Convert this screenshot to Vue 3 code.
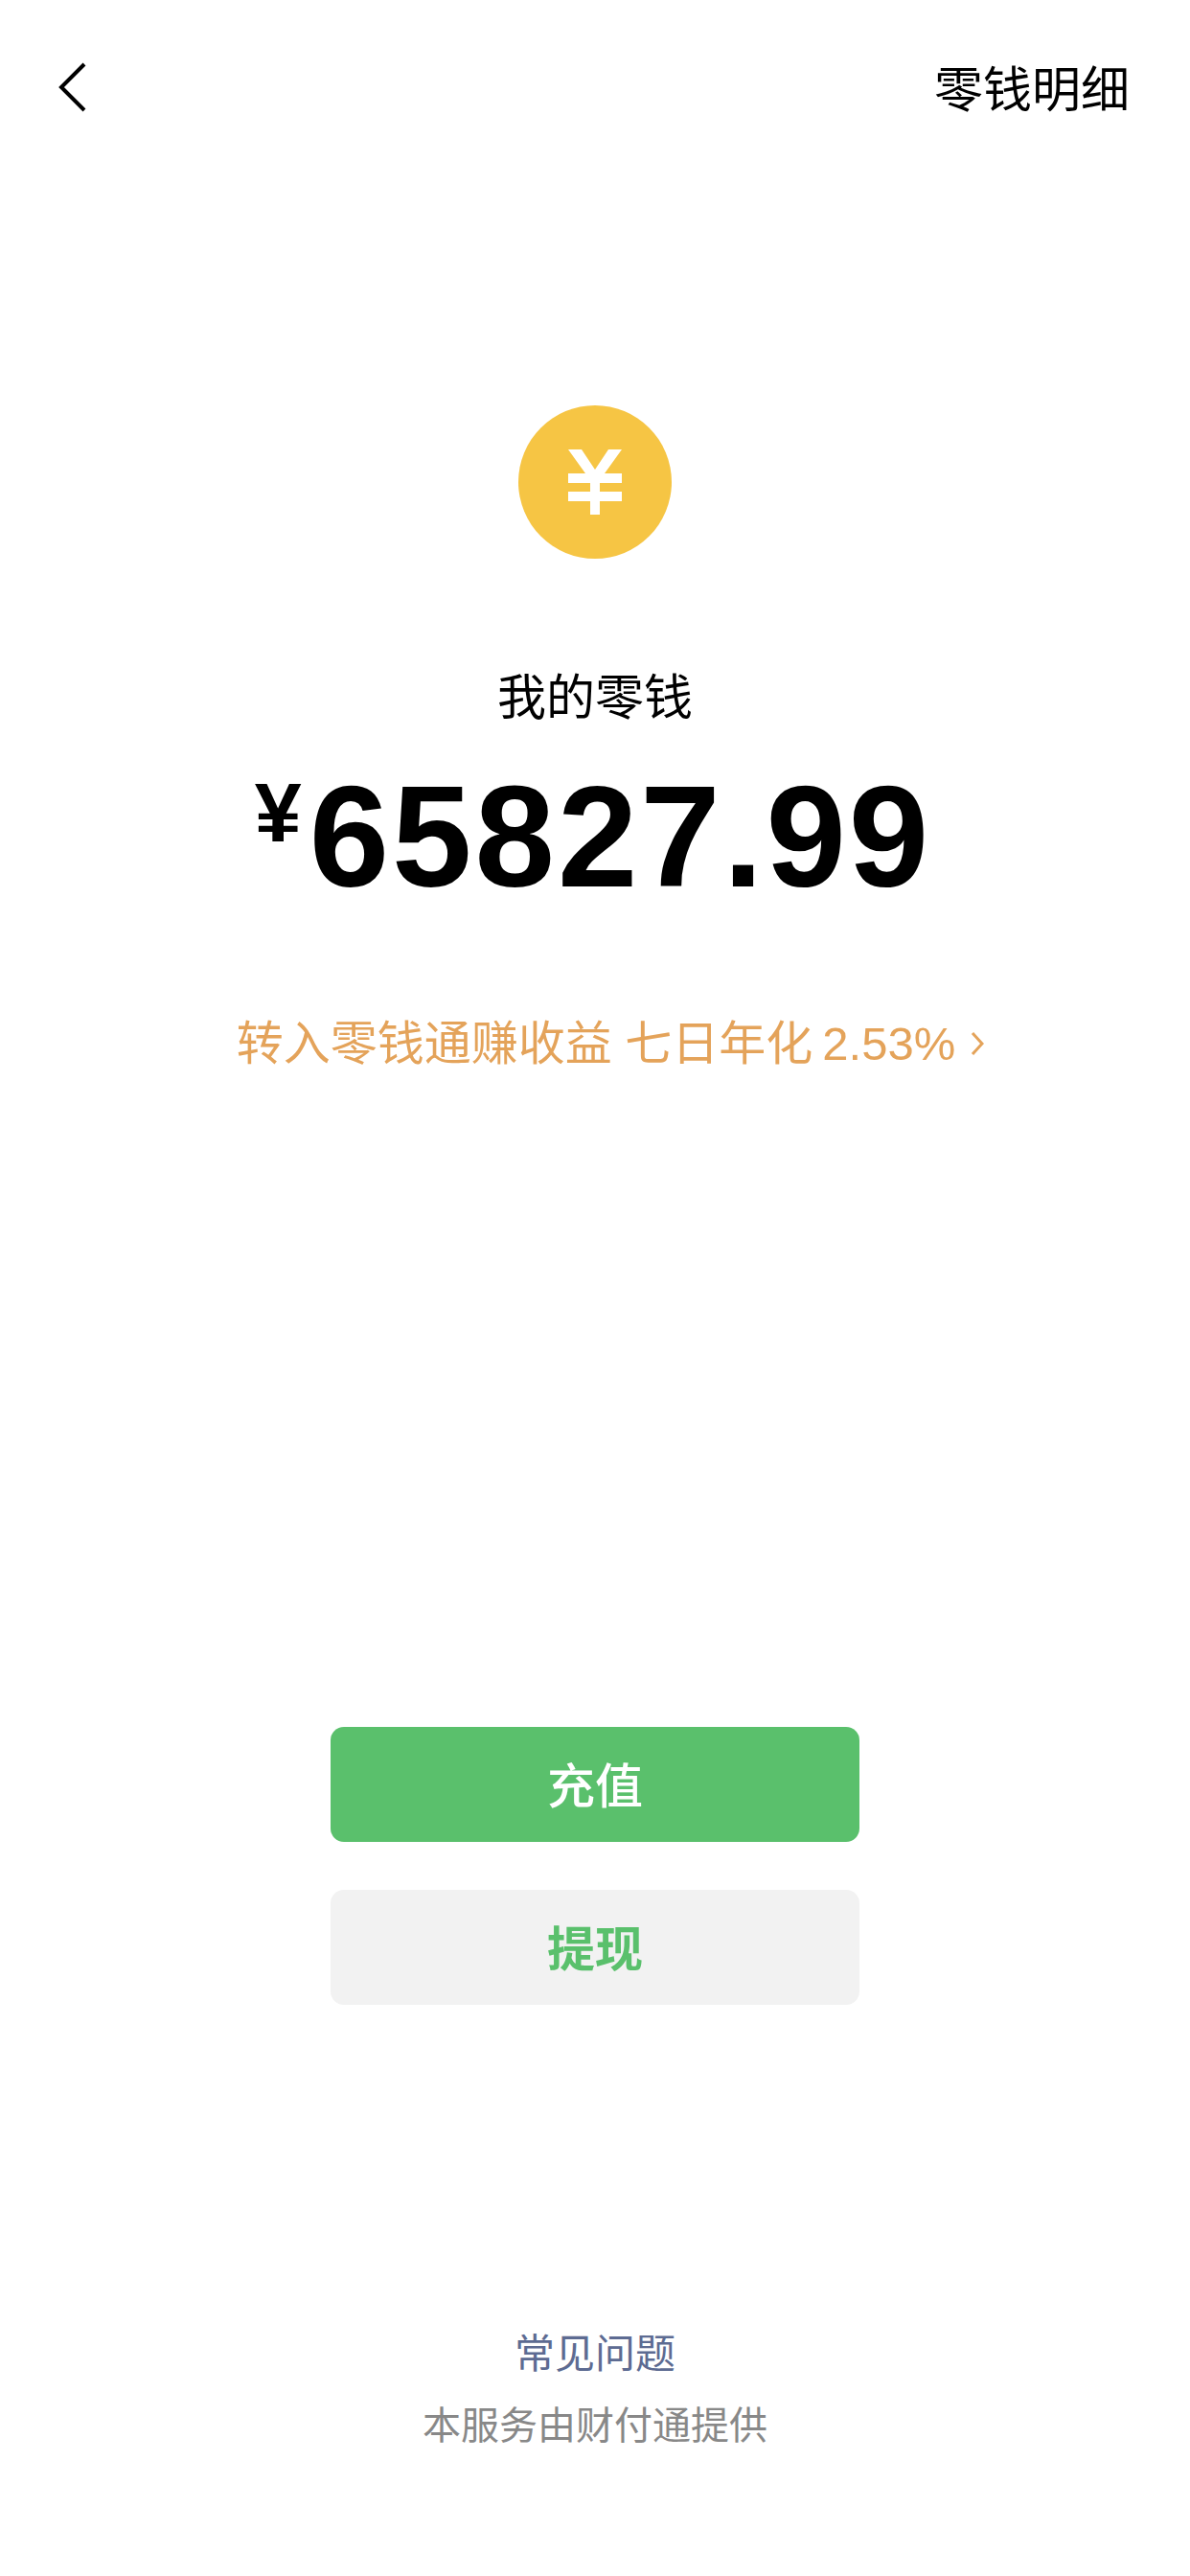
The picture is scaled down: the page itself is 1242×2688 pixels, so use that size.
<template>
  <div class="wallet">
    <header class="nav">
      <svg class="back" width="30" height="52" viewBox="0 0 30 52">
        <polyline points="27,2 3,26 27,50" fill="none" stroke="#000" stroke-width="4" />
      </svg>
      <span class="detail">零钱明细</span>
    </header>

    <div class="coin">
      <svg width="56" height="68" viewBox="0 0 56 68">
        <polygon fill="#fff" points="0,0 14,0 28,21 42,0 56,0 38,25 56,25 56,35 33,35 33,44 56,44 56,54 33,54 33,68 23,68 23,54 0,54 0,44 23,44 23,35 0,35 0,25 18,25" />
      </svg>
    </div>

    <div class="title">我的零钱</div>
    <div class="amount">
      <span class="yen">¥</span>
      <span class="value">{{ balance }}</span>
    </div>
    <div class="promo">
      <span>转入零钱通赚收益 七日年化<span class="rate">2.53%</span></span>
      <svg width="14" height="26" viewBox="0 0 14 26">
        <polyline points="2,2 12,13 2,24" fill="none" stroke="#e4a35a" stroke-width="3" />
      </svg>
    </div>

    <div class="actions">
      <button class="btn primary">充值</button>
      <button class="btn secondary">提现</button>
    </div>

    <footer class="foot">
      <div class="faq">常见问题</div>
      <div class="provider">本服务由财付通提供</div>
    </footer>
  </div>
</template>

<script setup>
const balance = '65827.99'
</script>

<style>
html,
body {
  background: #fff;
}
</style>

<style scoped>
.wallet {
  width: 1242px;
  height: 2688px;
  display: flex;
  flex-direction: column;
  align-items: center;
  background: #fff;
  font-family: "Liberation Sans", "Noto Sans CJK SC", sans-serif;
  overflow: hidden;
}

.nav {
  width: 100%;
  height: 182px;
  box-sizing: border-box;
  padding: 0 63px 0 61px;
  display: flex;
  justify-content: space-between;
  align-items: center;
}

.detail {
  margin-bottom: 3px;
  font-size: 51px;
  color: #000;
}

.coin {
  width: 160px;
  height: 160px;
  margin-top: 241px;
  border-radius: 50%;
  background: #f6c544;
  display: flex;
  align-items: center;
  justify-content: center;
}

.title {
  margin-top: 111px;
  font-size: 51px;
  line-height: 70px;
  color: #000;
}

.amount {
  margin-top: 19px;
  display: flex;
  align-items: flex-start;
  color: #000;
  font-weight: 700;
  line-height: 180px;
}

.yen {
  font-size: 88px;
  line-height: 100px;
  margin-top: 15px;
  margin-right: 8px;
}

.value {
  margin-right: 4px;
  font-size: 150px;
  letter-spacing: 3px;
}

.promo {
  margin-top: 91px;
  padding-left: 32px;
  display: flex;
  align-items: center;
  gap: 16px;
  font-size: 49px;
  line-height: 70px;
  color: #e4a35a;
}

.rate {
  margin-left: 10px;
}

.actions {
  margin-top: 678px;
  display: flex;
  flex-direction: column;
  gap: 50px;
}

.btn {
  width: 552px;
  height: 120px;
  padding: 0 0 4px;
  border: none;
  border-radius: 14px;
  font-family: inherit;
  font-size: 50px;
}

.primary {
  background: #5ac06c;
  color: #fff;
  font-weight: 500;
}

.secondary {
  background: #f2f2f2;
  color: #5ac06c;
  font-weight: 700;
}

.foot {
  margin-top: 335px;
  display: flex;
  flex-direction: column;
  align-items: center;
  gap: 14px;
}

.faq {
  font-size: 42px;
  line-height: 60px;
  color: #5d6b92;
}

.provider {
  font-size: 40px;
  line-height: 60px;
  color: #888;
}
</style>
